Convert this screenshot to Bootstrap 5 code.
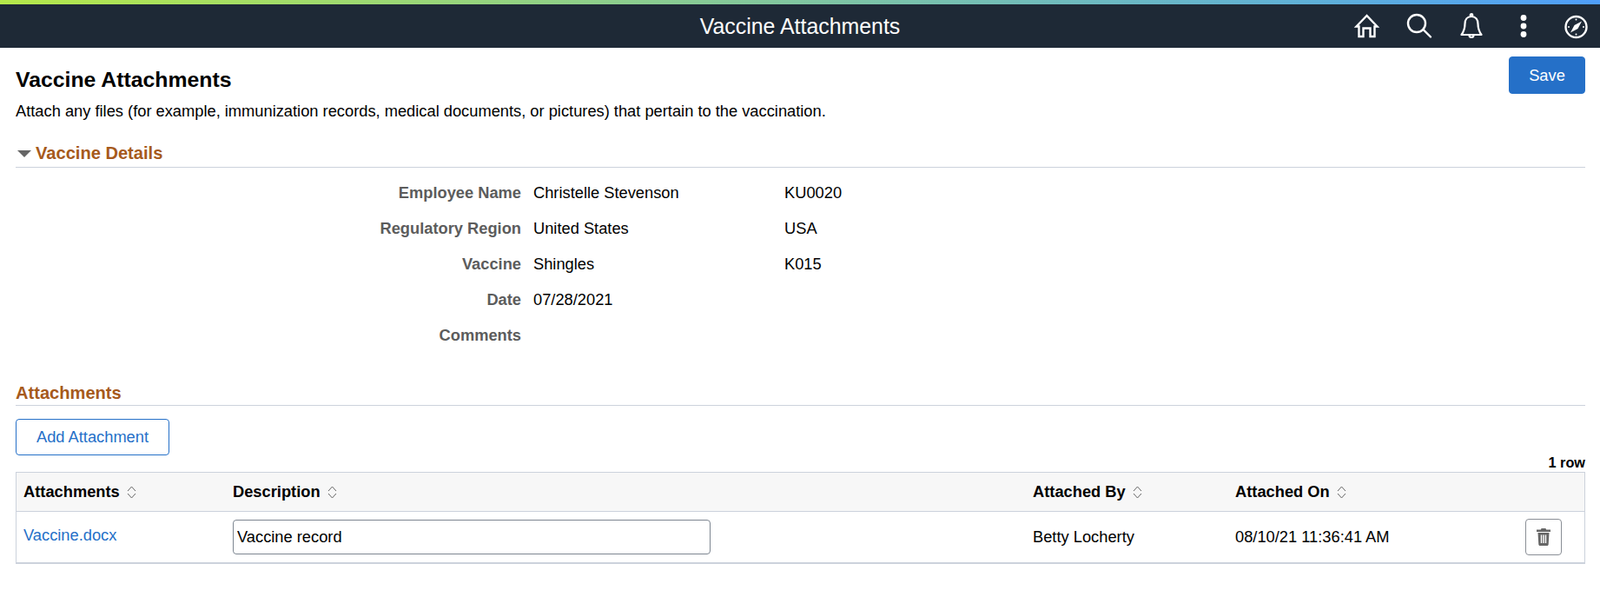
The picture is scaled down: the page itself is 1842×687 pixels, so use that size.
<!DOCTYPE html>
<html lang="en">
<head>
    <meta charset="UTF-8">
    <meta name="viewport" content="width=device-width, initial-scale=1.0">
    <title>Vaccine Attachments</title>
    <!-- Bootstrap CSS -->
    <link href="https://cdn.jsdelivr.net/npm/bootstrap@5.3.0/dist/css/bootstrap.min.css" rel="stylesheet">
    <style>
        body {
            font-family: "Liberation Sans", Arial, sans-serif;
            font-size: 18.3px;
            color: #000;
            background: #fff;
        }
        .top-strip {
            height: 5px;
            background: linear-gradient(90deg, #b5e84a 0%, #5fb0d8 82%, #4f9efa 100%);
        }
        .top-banner {
            height: 50px;
            background: #1e2936;
            color: #fff;
            position: relative;
        }
        .banner-title {
            font-size: 24.9px;
            line-height: 50px;
            text-align: center;
        }
        .banner-icons {
            position: absolute;
            top: 0;
            right: 13px;
            height: 50px;
            gap: 28px;
        }
        .banner-icons svg {
            display: block;
            width: 32px;
            height: 32px;
        }
        .page-wrap {
            padding: 10px 17px 0 18px;
        }
        .page-title {
            font-size: 24.8px;
            font-weight: 700;
            line-height: 30px;
            margin: 12px 0 0;
        }
        .page-intro {
            font-size: 18.3px;
            line-height: 22px;
            margin: 10px 0 0;
        }
        .save-btn {
            width: 88px;
            height: 43px;
            padding: 0;
            font-size: 18.3px;
            background: #2570c8;
            border: 1px solid #2570c8;
            border-radius: 4px;
            color: #fff;
        }
        .section-head {
            color: #a65a1c;
            font-size: 20.1px;
            font-weight: 700;
            line-height: 24px;
            border-bottom: 1px solid #ccd2dc;
        }
        .vd-head {
            margin-top: 25px;
            padding-bottom: 4px;
        }
        .att-head {
            margin-top: 34px;
            padding-bottom: 2px;
        }
        .head-caret {
            width: 0;
            height: 0;
            border-left: 8px solid transparent;
            border-right: 8px solid transparent;
            border-top: 8px solid #666;
            margin: 2px 5px 0 2px;
        }
        .detail-list {
            padding-top: 8px;
        }
        .detail-row {
            height: 41px;
            align-items: center;
        }
        .detail-label {
            width: 582px;
            text-align: right;
            color: #5c5c5c;
            font-weight: 700;
        }
        .detail-value {
            width: 289px;
            margin-left: 14px;
        }
        .add-btn {
            display: block;
            width: 177px;
            height: 42px;
            margin-top: 15px;
            padding: 0;
            font-size: 18.3px;
            color: #2570c8;
            background: #fff;
            border: 1px solid #2570c8;
            border-radius: 4px;
        }
        .row-count {
            font-size: 16.3px;
            font-weight: 700;
            line-height: 16px;
            text-align: right;
            margin-bottom: 3px;
        }
        .grid-wrap {
            border: 1px solid #ccd2dc;
            border-bottom-width: 2px;
        }
        .grid-table {
            table-layout: fixed;
            margin: 0;
            width: 100%;
        }
        .col-file { width: 241px; }
        .col-desc { width: 921px; }
        .col-by { width: 233px; }
        .col-on { width: 334px; }
        .grid-table th {
            height: 44px;
            background: #f7f7f7;
            font-weight: 700;
            padding: 0 8px;
            vertical-align: middle;
            border-bottom: 1px solid #ccd2dc;
            color: #000;
        }
        .grid-table td {
            height: 59px;
            padding: 0 8px;
            vertical-align: middle;
            border: 0;
            color: #000;
        }
        .sort-icon {
            width: 13px;
            height: 17px;
            margin-left: 7px;
            vertical-align: -3px;
        }
        .file-link {
            color: #2570c8;
            text-decoration: none;
            display: block;
            margin-top: -4px;
        }
        .desc-input {
            width: 550px;
            height: 40px;
            padding: 0 4px;
            font-size: 18.3px;
            color: #000;
            border: 1px solid #7d8691;
            border-radius: 4px;
        }
        .trash-btn {
            width: 42px;
            height: 42px;
            padding: 0;
            background: #fff;
            border: 1px solid #8a8f96;
            border-radius: 4px;
            display: flex;
            align-items: center;
            justify-content: center;
        }
    </style>
</head>
<body>
<div class="top-strip"></div>
<header class="top-banner">
    <div class="banner-title">Vaccine Attachments</div>
    <div class="banner-icons d-flex align-items-center">
        <!-- home -->
        <svg viewBox="0 0 32 32" fill="none" stroke="#fff" stroke-width="2.4" stroke-linejoin="miter">
            <path d="M16.5 4 4.500 16.500H7.500V28h5V18.500h8V28h5V16.500h3z"/>
        </svg>
        <!-- search -->
        <svg viewBox="0 0 32 32" fill="none" stroke="#fff" stroke-width="2.4" stroke-linecap="round">
            <circle cx="14" cy="13" r="10"/>
            <path d="M21.500 20l8.500 8.500"/>
        </svg>
        <!-- bell -->
        <svg viewBox="0 0 32 32" fill="none" stroke="#fff" stroke-width="2.2" stroke-linejoin="round">
            <path d="M17 5c-5 0-7.500 3.500-7.500 8.500 0 5-1.500 9-4 12.500h23c-2.500-3.500-4-7.500-4-12.500C24.500 8.500 22 5 17 5z"/>
            <circle cx="17" cy="3.500" r="1.300"/>
            <path d="M14.500 26.500a2.500 2.500 0 0 0 5 0"/>
        </svg>
        <!-- more -->
        <svg viewBox="0 0 32 32" fill="#fff">
            <circle cx="17" cy="6.500" r="3.400"/>
            <circle cx="17" cy="16" r="3.400"/>
            <circle cx="17" cy="25.500" r="3.400"/>
        </svg>
        <!-- navigator -->
        <svg viewBox="0 0 32 32" fill="none" stroke="#fff" stroke-width="2.4">
            <circle cx="17.500" cy="17" r="12"/>
            <path d="M24 10.500 15.500 15 11 23.500 19.500 19z" fill="#fff" stroke="none"/>
            <circle cx="17.500" cy="8.500" r="1" fill="#fff" stroke="none"/>
            <circle cx="17.500" cy="25.500" r="1" fill="#fff" stroke="none"/>
            <circle cx="9" cy="17" r="1" fill="#fff" stroke="none"/>
            <circle cx="26" cy="17" r="1" fill="#fff" stroke="none"/>
        </svg>
    </div>
</header>

<main class="page-wrap">
    <div class="d-flex justify-content-between align-items-start">
        <div>
            <h1 class="page-title">Vaccine Attachments</h1>
            <p class="page-intro">Attach any files (for example, immunization records, medical documents, or pictures) that pertain to the vaccination.</p>
        </div>
        <button type="button" class="btn save-btn">Save</button>
    </div>

    <!-- Vaccine Details -->
    <div class="section-head d-flex align-items-center vd-head">
        <span class="head-caret"></span>Vaccine Details
    </div>
    <div class="detail-list">
        <div class="d-flex detail-row"><div class="detail-label">Employee Name</div><div class="detail-value">Christelle Stevenson</div><div>KU0020</div></div>
        <div class="d-flex detail-row"><div class="detail-label">Regulatory Region</div><div class="detail-value">United States</div><div>USA</div></div>
        <div class="d-flex detail-row"><div class="detail-label">Vaccine</div><div class="detail-value">Shingles</div><div>K015</div></div>
        <div class="d-flex detail-row"><div class="detail-label">Date</div><div class="detail-value">07/28/2021</div></div>
        <div class="d-flex detail-row"><div class="detail-label">Comments</div></div>
    </div>

    <!-- Attachments -->
    <div class="section-head att-head">Attachments</div>
    <button type="button" class="btn add-btn">Add Attachment</button>
    <div class="row-count">1 row</div>
    <div class="grid-wrap">
        <table class="table grid-table">
            <colgroup>
                <col class="col-file">
                <col class="col-desc">
                <col class="col-by">
                <col class="col-on">
                <col>
            </colgroup>
            <thead>
                <tr>
                    <th>Attachments<svg class="sort-icon" viewBox="0 0 13 17" fill="none" stroke="#666" stroke-width="1"><path d="M2 7l4.500-5L11 7M2 10l4.500 5L11 10"/></svg></th>
                    <th>Description<svg class="sort-icon" viewBox="0 0 13 17" fill="none" stroke="#666" stroke-width="1"><path d="M2 7l4.500-5L11 7M2 10l4.500 5L11 10"/></svg></th>
                    <th>Attached By<svg class="sort-icon" viewBox="0 0 13 17" fill="none" stroke="#666" stroke-width="1"><path d="M2 7l4.500-5L11 7M2 10l4.500 5L11 10"/></svg></th>
                    <th>Attached On<svg class="sort-icon" viewBox="0 0 13 17" fill="none" stroke="#666" stroke-width="1"><path d="M2 7l4.500-5L11 7M2 10l4.500 5L11 10"/></svg></th>
                    <th></th>
                </tr>
            </thead>
            <tbody>
                <tr>
                    <td><a href="#" class="file-link">Vaccine.docx</a></td>
                    <td><input type="text" class="desc-input" value="Vaccine record"></td>
                    <td>Betty Locherty</td>
                    <td>08/10/21 11:36:41 AM</td>
                    <td>
                        <button type="button" class="trash-btn" aria-label="Delete">
                            <svg width="16" height="20" viewBox="0 0 16 20" fill="#666">
                                <path d="M5.500 0h5l.6 1.500H16V4H0V1.500h4.900z"/>
                                <path d="M1.500 5h13l-.8 13.200c0 1-.7 1.800-1.700 1.800H4c-1 0-1.700-.8-1.700-1.800zM4.800 7.500v9.500h1.400V7.500zm2.500 0v9.500h1.400V7.500zm2.500 0v9.500h1.400V7.500z" fill-rule="evenodd"/>
                            </svg>
                        </button>
                    </td>
                </tr>
            </tbody>
        </table>
    </div>
</main>

<!-- Bootstrap JS -->
<script src="https://cdn.jsdelivr.net/npm/bootstrap@5.3.0/dist/js/bootstrap.bundle.min.js"></script>
</body>
</html>
